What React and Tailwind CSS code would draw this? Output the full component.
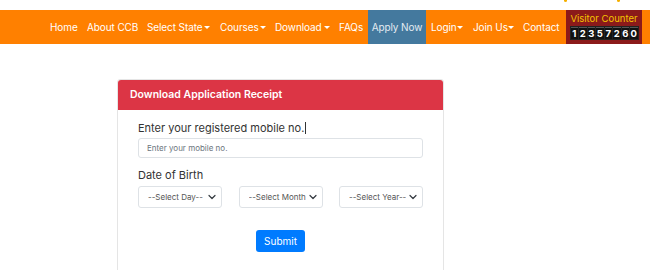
import React from 'react';

const navItems = [
  { label: 'Home', w: 'w-[28px]', ml: 'ml-0' },
  { label: 'About CCB', w: 'w-[50px]', ml: 'ml-[9px]' },
  { label: 'Select State', w: 'w-[63px]', ml: 'ml-[10px]', caret: true },
  { label: 'Courses', w: 'w-[46px]', ml: 'ml-[10px]', caret: true },
  { label: 'Download', w: 'w-[55px]', ml: 'ml-[9px]', caret: true },
  { label: 'FAQs', w: 'w-[24px]', ml: 'ml-[9px]' },
  { label: 'Apply Now', w: 'w-[58px]', ml: 'ml-[5px]', active: true },
  { label: 'Login', w: 'w-[31px]', ml: 'ml-[5px]', caret: true },
  { label: 'Join Us', w: 'w-[41px]', ml: 'ml-[11px]', caret: true },
  { label: 'Contact', w: 'w-[38px]', ml: 'ml-[9px]' },
];

const Caret = () => (
  <span className="inline-block w-0 h-0 border-l-[3px] border-r-[3px] border-t-[3.5px] border-l-transparent border-r-transparent border-t-white"></span>
);

const Chevron = () => (
  <svg width="8" height="8" viewBox="0 0 16 16" className="shrink-0">
    <path d="M2 5l6 6 6-6" fill="none" stroke="#343a40" strokeWidth="2.4" strokeLinecap="round" strokeLinejoin="round" />
  </svg>
);

const Select = ({ label }) => (
  <div className="w-[84px] h-[22px] border border-[#dee2e6] rounded-[3px] flex items-center justify-between pl-[9px] pr-[5px] bg-white">
    <span className="text-[8px] text-[#555] whitespace-nowrap overflow-hidden">{label}</span>
    <Chevron />
  </div>
);

export default function App() {
  const digits = '12357260'.split('');
  return (
    <div className="w-[650px] h-[270px] bg-white overflow-hidden" style={{ fontFamily: 'Inter, "Noto Sans", sans-serif' }}>
      {/* strip above the nav: only the bottoms of a clipped tagline peek through */}
      <div className="h-[10px] relative overflow-hidden">
        <span className="absolute left-[564px] top-0 w-[3px] h-[2px] rounded-b-full bg-[#f5b000]"></span>
        <span className="absolute left-[617px] top-0 w-[3px] h-[2px] rounded-b-full bg-[#f5b000]"></span>
      </div>
      <nav className="h-[34px] bg-[#ff8000] flex items-stretch pl-[50px]">
        {navItems.map((item) => (
          <div
            key={item.label}
            className={`flex items-center text-[10px] tracking-[-0.1px] whitespace-nowrap ${item.w} ${item.ml} ${item.active ? 'bg-[#44799e] text-[#e3ebf1] justify-center' : 'text-white justify-between'}`}
          >
            {item.label}
            {item.caret && <Caret />}
          </div>
        ))}
        <div className="ml-[5px] w-[76px] bg-[#8b1a1a] flex flex-col items-center justify-center gap-[3px]">
          <span className="text-[9.5px] text-[#f5c400] leading-none whitespace-nowrap">Visitor Counter</span>
          <div className="flex gap-[1px] bg-[#222] p-[1px]">
            {digits.map((d, i) => (
              <span key={i} className="w-[7.5px] h-[12px] bg-[#111] border-t border-[#555] text-white text-[9.5px] leading-[11px] font-bold text-center">{d}</span>
            ))}
          </div>
        </div>
      </nav>

      <div className="pl-[117px] pt-[35px]">
        <div className="w-[327px] border border-[#e5e5e5] rounded-[3px] h-[250px]">
          <div className="h-[30px] bg-[#dc3545] rounded-t-[3px] flex items-center pl-[12px]">
            <span className="text-white text-[10.5px] font-semibold">Download Application Receipt</span>
          </div>
          <div className="px-[20px] pt-[11px]">
            <div className="text-[11px] text-[#333] leading-[14px] flex items-center">
              Enter your registered mobile no.
              <span className="inline-block w-[1px] h-[12px] bg-[#333] ml-[1px]"></span>
            </div>
            <div className="mt-[3px] h-[20px] border border-[#dee2e6] rounded-[3px] flex items-center pl-[8px]">
              <span className="text-[8px] text-[#6c757d]">Enter your mobile no.</span>
            </div>
            <div className="mt-[10px] text-[11px] text-[#333] leading-[14px]">Date of Birth</div>
            <div className="mt-[4px] flex justify-between">
              <Select label="--Select Day--" />
              <Select label="--Select Month" />
              <Select label="--Select Year--" />
            </div>
            <div className="mt-[22px] flex justify-center">
              <button className="w-[49px] h-[22px] bg-[#007bff] text-white text-[10px] rounded-[3px]">Submit</button>
            </div>
          </div>
        </div>
      </div>
    </div>
  );
}
